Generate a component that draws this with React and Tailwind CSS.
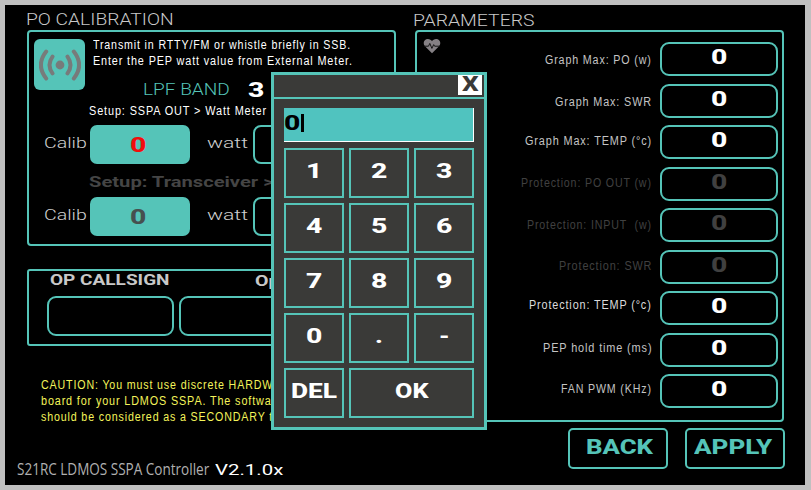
import { useLayoutEffect, useRef } from "react";

// Stretches a single line of text horizontally so it fills its slot.
function Fit({ className = "", children }) {
  const slot = useRef(null);
  const run = useRef(null);
  useLayoutEffect(() => {
    const fit = () => {
      const w = run.current.offsetWidth;
      if (w) run.current.style.transform = `scaleX(${slot.current.clientWidth / w})`;
    };
    fit();
    document.fonts?.ready.then(fit);
  }, [children]);
  return (
    <div ref={slot} className={`shrink-0 whitespace-pre ${className}`}>
      <span ref={run} className="inline-block origin-left align-top">{children}</span>
    </div>
  );
}

const wide = "font-['Roboto',sans-serif]";
const block = "font-['Roboto',sans-serif] font-extrabold";
const small = "font-['Liberation_Sans',Arial,sans-serif] text-[12.5px] leading-4 tracking-[1px]";

const params = [
  { label: "Graph Max: PO (w)", size: "w-[107px] mt-[10px]", tone: "text-[#c4c4c4]", value: "text-white" },
  { label: "Graph Max: SWR", size: "w-[97px] mt-[10px]", tone: "text-[#c4c4c4]", value: "text-white" },
  { label: "Graph Max: TEMP (°c)", size: "w-[127px] mt-[8px]", tone: "text-[#c4c4c4]", value: "text-white" },
  { label: "Protection: PO OUT (w)", size: "w-[131px] mt-[8px]", tone: "text-[#404040]", value: "text-[#404040]" },
  { label: "Protection: INPUT  (w)", size: "w-[125px] mt-[9px]", tone: "text-[#404040]", value: "text-[#404040]" },
  { label: "Protection: SWR", size: "w-[93px] mt-[8px]", tone: "text-[#404040]", value: "text-[#404040]" },
  { label: "Protection: TEMP (°c)", size: "w-[123px] mt-[6px]", tone: "text-[#dcdcdc]", value: "text-white" },
  { label: "PEP hold time (ms)", size: "w-[109px] mt-[7px]", tone: "text-[#c4c4c4]", value: "text-white" },
  { label: "FAN PWM (KHz)", size: "w-[91px] mt-[7px]", tone: "text-[#c4c4c4]", value: "text-white" },
];

function CalibRow({ tone }) {
  return (
    <div className="flex h-[39px]">
      <Fit className={`${wide} ml-[15px] mt-[9px] w-[43px] text-[15px] leading-[18px] font-light text-[#d0d0d0]`}>Calib</Fit>
      <div className="ml-[3px] flex h-[39px] w-[100px] justify-center rounded-[7px] bg-[#55c4b8]">
        <Fit className={`${block} mr-[3px] mt-[10px] w-[17px] text-[20px] leading-5 ${tone}`}>0</Fit>
      </div>
      <Fit className={`${wide} ml-[17px] mt-[9px] w-[41px] text-[15px] leading-[18px] font-light text-[#d0d0d0]`}>watt</Fit>
      <div className="ml-[5px] h-[39px] w-[100px] rounded-[8px] border-2 border-[#55c4b8]" />
    </div>
  );
}

function Calibration() {
  return (
    <section className="h-[216px] w-[369px] rounded-[4px] border-2 border-[#55c4b8]">
      <div className="flex h-[61px]">
        <div className="ml-[5px] mt-[7px] flex size-[51px] items-center justify-center rounded-[6px] bg-[#55c4b8]">
          <svg viewBox="0 0 42 32" className="h-[32px] w-[42px]" fill="none" stroke="#777b7b" strokeWidth="4" strokeLinecap="round">
            <circle cx="21" cy="16" r="4.4" fill="#777b7b" stroke="none" />
            <path d="M13.5 7.6Q7.5 16 13.5 24.4M7.2 2.6Q-3.4 16 7.2 29.4M28.5 7.6Q34.5 16 28.5 24.4M34.8 2.6Q45.4 16 34.8 29.4" />
          </svg>
        </div>
        <div className="ml-2 mt-[5px] text-white">
          <Fit className={`${small} w-[258px]`}>Transmit in RTTY/FM or whistle briefly in SSB.</Fit>
          <Fit className={`${small} w-[260px]`}>Enter the PEP watt value from External Meter.</Fit>
        </div>
      </div>
      <div className="-mt-[13px] flex h-[20px]">
        <Fit className={`${wide} ml-[114px] mt-[1px] w-[87px] text-[16px] leading-[18px] font-light text-[#55c4b8]`}>LPF BAND</Fit>
        <Fit className={`${block} ml-[18px] w-[17px] text-[20px] leading-5 text-white`}>3</Fit>
      </div>
      <Fit className={`${small} ml-[60px] mt-[3px] w-[178px] text-white`}>{"Setup: SSPA OUT > Watt Meter"}</Fit>
      <div className="mt-[6px]"><CalibRow tone="text-[#f20d0d]" /></div>
      <Fit className={`${wide} ml-[60px] mt-[10px] w-[184px] text-[15px] leading-4 font-bold text-[#454545]`}>{"Setup: Transceiver >"}</Fit>
      <div className="mt-[7px]"><CalibRow tone="text-[#46504f]" /></div>
    </section>
  );
}

function Parameters() {
  return (
    <section className="flex h-[392px] w-[369px] rounded-[4px] border-2 border-[#55c4b8]">
      <svg viewBox="0 0 18 16" className="ml-[6px] mt-[6px] h-[16px] w-[18px]">
        <path d="M9 15.2L2 8.3C-.8 4.8 1.3 1 4.8 1 6.7 1 8.2 2 9 3.2 9.8 2 11.3 1 13.2 1c3.5 0 5.6 3.8 2.8 7.3Z" fill="#858084" />
        <path d="M1 8.2h4.5l1.3-2.8 2.1 5 1.8-3.8.9 1.6H17" fill="none" stroke="#151515" strokeWidth="1" />
      </svg>
      <div className="ml-auto mr-[4px] mt-[10px]">
        {params.map((p) => (
          <div key={p.label} className="flex h-[41.5px] justify-end">
            <Fit className={`${small} ${p.size} ${p.tone}`}>{p.label}</Fit>
            <div className="ml-[8px] flex h-[34px] w-[118px] justify-center rounded-[9px] border-2 border-[#55c4b8]">
              <Fit className={`${block} mt-[3px] w-[17px] text-[20px] leading-5 ${p.value}`}>0</Fit>
            </div>
          </div>
        ))}
      </div>
    </section>
  );
}

const keys = ["1", "2", "3", "4", "5", "6", "7", "8", "9", "0", ".", "-"];

function Keypad() {
  return (
    <div className="absolute left-[266px] top-[67px] h-[358px] w-[216px] border-[3px] border-[#55c4b8] bg-[#3a3a38]">
      <div className="flex h-[24px] justify-end border-b-2 border-[#55c4b8] pr-[2px]">
        <div className="flex h-[20px] w-[24px] justify-center bg-white">
          <Fit className={`${block} w-[17px] text-[20px] leading-[19px] text-[#3a3a38]`}>X</Fit>
        </div>
      </div>
      <div className="mx-[10px] mt-[9px] flex h-[34px] border-r border-b border-white bg-[#50c3bf]">
        <Fit className={`${block} mt-[4px] w-[17px] text-[20px] leading-[22px] text-black`}>0</Fit>
        <div className="mt-[6px] h-[18px] w-[3px] bg-black" />
      </div>
      <div className="mx-[10px] mt-[6px] grid grid-cols-3 gap-[5px]">
        {keys.map((k) => (
          <div key={k} className="flex h-[50px] justify-center border-2 border-[#55c4b8]">
            <Fit className={`${block} mt-[11px] text-[20px] leading-5 text-white ${k === "." ? "w-[8px]" : k === "-" ? "w-[10px]" : "w-[17px]"}`}>{k}</Fit>
          </div>
        ))}
        <div className="flex h-[50px] justify-center border-2 border-[#55c4b8]">
          <Fit className={`${block} mt-[11px] w-[46px] text-[20px] leading-5 text-white`}>DEL</Fit>
        </div>
        <div className="col-span-2 flex h-[50px] justify-center border-2 border-[#55c4b8]">
          <Fit className={`${block} mt-[11px] w-[34px] text-[20px] leading-5 text-white`}>OK</Fit>
        </div>
      </div>
    </div>
  );
}

export default function App() {
  return (
    <div className="h-[490px] w-[811px] overflow-hidden bg-[#c0c0c0] pl-[5px] pt-[5px]">
      <main className="relative flex h-[480px] w-[800px] overflow-hidden bg-black">
        <div className="ml-[22px] w-[369px] shrink-0">
          <Fit className={`${wide} -ml-px mt-[5px] w-[148px] text-[16px] leading-5 font-light text-[#c8c8c8]`}>PO CALIBRATION</Fit>
          <Calibration />
          <section className="mt-[23px] h-[77px] w-[369px] rounded-[3px] border-2 border-[#55c4b8]">
            <div className="flex h-[25px]">
              <Fit className={`${wide} ml-[21px] w-[119px] text-[15.5px] leading-[18px] font-bold text-[#c8c8c8]`}>OP CALLSIGN</Fit>
              <Fit className={`${wide} ml-[86px] mt-[1px] w-[24px] text-[15.5px] leading-[18px] font-bold text-[#c8c8c8]`}>Op</Fit>
            </div>
            <div className="flex gap-[5px] pl-[18px]">
              <div className="h-[40px] w-[127px] rounded-[9px] border-2 border-[#55c4b8]" />
              <div className="h-[40px] w-[160px] rounded-[9px] border-2 border-[#55c4b8]" />
            </div>
          </section>
          <div className="ml-[14px] mt-[31px] w-[232px] overflow-hidden text-[#f4f45a]">
            <Fit className={`${small} w-[232px]`}>CAUTION: You must use discrete HARDW</Fit>
            <Fit className={`${small} w-[231px]`}>board for your LDMOS SSPA. The softwa</Fit>
            <Fit className={`${small} w-[232px]`}>should be considered as a SECONDARY t</Fit>
          </div>
          <div className="-ml-[10px] mt-[33px] flex">
            <Fit className="mt-px w-[192px] font-['Open_Sans',sans-serif] text-[15.5px] leading-5 font-normal text-[#b0b0b0]">S21RC LDMOS SSPA Controller</Fit>
            <Fit className={`${wide} ml-[6px] mt-[2px] w-[68px] text-[15px] leading-5 font-normal text-white`}>V2.1.0x</Fit>
          </div>
        </div>
        <div className="ml-[19px] w-[370px] shrink-0">
          <Fit className={`${wide} -ml-[2px] mt-[6px] -mb-px w-[121px] text-[16px] leading-[20px] font-light text-[#c8c8c8]`}>PARAMETERS</Fit>
          <Parameters />
          <div className="ml-[153px] mt-[6px] flex gap-[17px]">
            <div className="flex h-[41px] w-[100px] justify-center rounded-[5px] border-2 border-[#55c4b8]">
              <Fit className={`${block} ml-[2px] mt-[7px] w-[67px] text-[20px] leading-5 text-[#55c4b8]`}>BACK</Fit>
            </div>
            <div className="flex h-[41px] w-[100px] shrink-0 justify-center rounded-[5px] border-2 border-[#55c4b8]">
              <Fit className={`${block} mr-[4px] mt-[7px] w-[78px] text-[20px] leading-5 text-[#55c4b8]`}>APPLY</Fit>
            </div>
          </div>
        </div>
        <Keypad />
      </main>
    </div>
  );
}
